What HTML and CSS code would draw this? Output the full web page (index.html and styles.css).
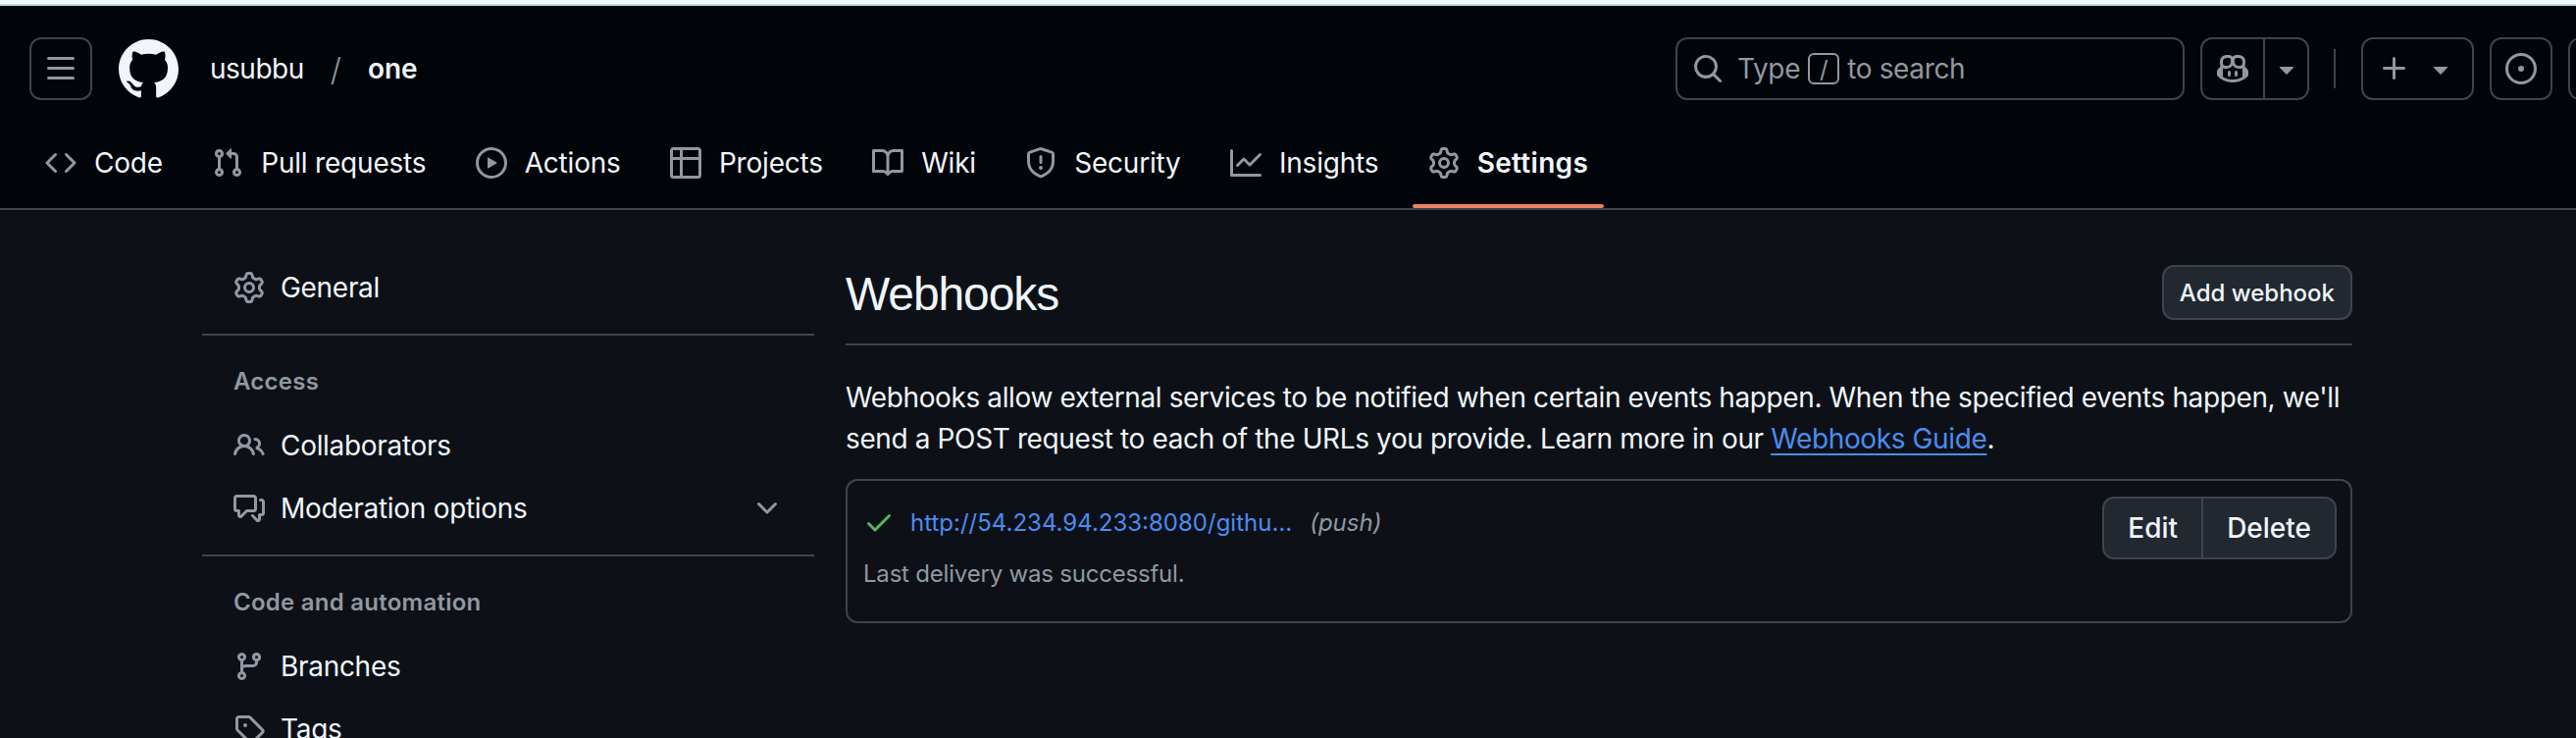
FILE: index.html
```html
<!DOCTYPE html>
<html lang="en">
<head>
<meta charset="utf-8">
<title>Webhooks · usubbu/one</title>
<link rel="stylesheet" href="styles.css">
</head>
<body>
<svg class="sprite" aria-hidden="true">
  <symbol id="i-gear" viewBox="0 0 16 16"><path d="M8 0a8.2 8.2 0 0 1 .701.031C9.444.095 9.99.645 10.16 1.29l.288 1.107c.018.066.079.158.212.224.231.114.454.243.668.386.123.082.233.09.299.071l1.103-.303c.644-.176 1.392.021 1.82.63.27.385.506.792.704 1.218.315.675.111 1.422-.364 1.891l-.814.806c-.049.048-.098.147-.088.294.016.257.016.515 0 .772-.01.147.038.246.088.294l.814.806c.475.469.679 1.216.364 1.891a7.977 7.977 0 0 1-.704 1.217c-.428.61-1.176.807-1.82.63l-1.102-.302c-.067-.019-.177-.011-.3.071a5.909 5.909 0 0 1-.668.386c-.133.066-.194.158-.211.224l-.29 1.106c-.168.646-.715 1.196-1.458 1.26a8.006 8.006 0 0 1-1.402 0c-.743-.064-1.289-.614-1.458-1.26l-.289-1.106c-.018-.066-.079-.158-.212-.224a5.738 5.738 0 0 1-.668-.386c-.123-.082-.233-.09-.299-.071l-1.103.303c-.644.176-1.392-.021-1.82-.63a8.12 8.12 0 0 1-.704-1.218c-.315-.675-.111-1.422.363-1.891l.815-.806c.05-.048.098-.147.088-.294a6.214 6.214 0 0 1 0-.772c.01-.147-.038-.246-.088-.294l-.815-.806C.635 6.045.431 5.298.746 4.623a7.92 7.92 0 0 1 .704-1.217c.428-.61 1.176-.807 1.82-.63l1.102.302c.067.019.177.011.3-.071.214-.143.437-.272.668-.386.133-.066.194-.158.211-.224l.29-1.106C6.009.645 6.556.095 7.299.03 7.53.01 7.764 0 8 0Zm-.571 1.525c-.036.003-.108.036-.137.146l-.289 1.105c-.147.561-.549.967-.998 1.189-.173.086-.34.183-.5.29-.417.278-.97.423-1.529.27l-1.103-.303c-.109-.03-.175.016-.195.045-.22.312-.412.644-.573.99-.014.031-.021.11.059.19l.815.806c.411.406.562.957.53 1.456a4.709 4.709 0 0 0 0 .582c.032.499-.119 1.05-.53 1.456l-.815.806c-.081.08-.073.159-.059.19.162.346.353.677.573.989.02.03.085.076.195.046l1.102-.303c.56-.153 1.113-.008 1.53.27.161.107.328.204.501.29.447.222.85.629.997 1.189l.289 1.105c.029.109.101.143.137.146a6.6 6.6 0 0 0 1.142 0c.036-.003.108-.036.137-.146l.289-1.105c.147-.561.549-.967.998-1.189.173-.086.34-.183.5-.29.417-.278.97-.423 1.529-.27l1.103.303c.109.029.175-.016.195-.045.22-.313.411-.644.573-.99.014-.031.021-.11-.059-.19l-.815-.806c-.411-.406-.562-.957-.53-1.456a4.709 4.709 0 0 0 0-.582c-.032-.499.119-1.05.53-1.456l.815-.806c.081-.08.073-.159.059-.19a6.464 6.464 0 0 0-.573-.989c-.02-.03-.085-.076-.195-.046l-1.102.303c-.56.153-1.113.008-1.53-.27a4.44 4.44 0 0 0-.501-.29c-.447-.222-.85-.629-.997-1.189l-.289-1.105c-.029-.11-.101-.143-.137-.146a6.6 6.6 0 0 0-1.142 0ZM11 8a3 3 0 1 1-6 0 3 3 0 0 1 6 0ZM9.5 8a1.5 1.5 0 1 0-3.001.001A1.5 1.5 0 0 0 9.5 8Z"/></symbol>
  <symbol id="i-caret" viewBox="0 0 16 16"><path d="m4.427 7.427 3.396 3.396a.25.25 0 0 0 .354 0l3.396-3.396A.25.25 0 0 0 11.396 7H4.604a.25.25 0 0 0-.177.427Z"/></symbol>
</svg>

<div class="strip"></div>

<header class="app-header">
  <div class="top-row">
    <div class="context">
      <button class="icon-btn" type="button" aria-label="Open menu">
        <svg class="icon" viewBox="0 0 16 16"><path d="M1 2.75A.75.75 0 0 1 1.75 2h12.5a.75.75 0 0 1 0 1.5H1.75A.75.75 0 0 1 1 2.75Zm0 5A.75.75 0 0 1 1.75 7h12.5a.75.75 0 0 1 0 1.5H1.75A.75.75 0 0 1 1 7.75ZM1.75 12h12.5a.75.75 0 0 1 0 1.5H1.75a.75.75 0 0 1 0-1.5Z"/></svg>
      </button>
      <svg class="logo" viewBox="0 0 16 16"><path d="M8 0c4.42 0 8 3.58 8 8a8.013 8.013 0 0 1-5.45 7.59c-.4.08-.55-.17-.55-.38 0-.27.01-1.13.01-2.2 0-.75-.25-1.23-.54-1.48 1.78-.2 3.65-.88 3.65-3.95 0-.88-.31-1.59-.82-2.15.08-.2.36-1.02-.08-2.12 0 0-.67-.22-2.2.82-.64-.18-1.32-.27-2-.27-.68 0-1.36.09-2 .27-1.53-1.03-2.2-.82-2.2-.82-.44 1.1-.16 1.92-.08 2.12-.51.56-.82 1.28-.82 2.15 0 3.06 1.86 3.75 3.64 3.95-.23.2-.44.55-.51 1.07-.46.21-1.61.55-2.33-.66-.15-.24-.6-.83-1.23-.82-.67.01-.27.38.01.53.34.19.73.9.82 1.13.16.45.68 1.31 2.69.94 0 .67.01 1.3.01 1.49 0 .21-.15.45-.55.38A7.995 7.995 0 0 1 0 8c0-4.42 3.58-8 8-8Z"/></svg>
      <a class="crumb">usubbu</a>
      <span class="crumb-sep">/</span>
      <a class="crumb crumb-current">one</a>
    </div>
    <div class="actions">
      <div class="search">
        <svg class="icon" viewBox="0 0 16 16"><path d="M10.68 11.74a6 6 0 0 1-7.922-8.982 6 6 0 0 1 8.982 7.922l3.04 3.04a.749.749 0 0 1-.326 1.275.749.749 0 0 1-.734-.215ZM11.5 7a4.499 4.499 0 1 0-8.997 0A4.499 4.499 0 0 0 11.5 7Z"/></svg>
        <span class="search-text">Type <kbd class="key">/</kbd> to search</span>
      </div>
      <div class="split">
        <button class="split-main" type="button" aria-label="Copilot">
          <svg class="icon" viewBox="0 0 16 16"><path d="M7.998 15.035c-4.562 0-7.873-2.914-7.998-3.749V9.338c.085-.628.677-1.686 1.588-2.065.013-.07.024-.143.036-.218.029-.183.06-.384.126-.612-.201-.508-.254-1.084-.254-1.656 0-.87.128-1.769.693-2.484.579-.733 1.494-1.124 2.724-1.261 1.206-.134 2.262.034 2.944.765.05.053.096.108.139.165.044-.057.094-.112.143-.165.682-.731 1.738-.899 2.944-.765 1.23.137 2.145.528 2.724 1.261.566.715.693 1.614.693 2.484 0 .572-.053 1.148-.254 1.656.066.228.098.429.126.612.012.076.024.148.037.218.924.385 1.522 1.471 1.591 2.095v1.872c0 .766-3.351 3.795-8.002 3.795Zm0-1.485c2.28 0 4.584-1.11 5.002-1.433V7.862l-.023-.116c-.49.21-1.075.291-1.727.291-1.146 0-2.059-.327-2.71-.991A3.222 3.222 0 0 1 8 6.303a3.24 3.24 0 0 1-.544.743c-.65.664-1.563.991-2.71.991-.652 0-1.236-.081-1.727-.291l-.023.116v4.255c.419.323 2.722 1.433 5.002 1.433ZM6.762 2.83c-.193-.206-.637-.413-1.682-.297-1.019.113-1.479.404-1.713.7-.247.312-.369.789-.369 1.554 0 .793.129 1.171.308 1.371.162.181.519.379 1.442.379.853 0 1.339-.235 1.638-.54.315-.322.527-.827.617-1.553.117-.935-.037-1.395-.241-1.614Zm4.155-.297c-1.044-.116-1.488.091-1.681.297-.204.219-.359.679-.242 1.614.091.726.303 1.231.618 1.553.299.305.784.54 1.638.54.922 0 1.28-.198 1.442-.379.179-.2.308-.578.308-1.371 0-.765-.123-1.242-.37-1.554-.233-.296-.693-.587-1.713-.7Z"/><path d="M6.25 9.037a.75.75 0 0 1 .75.75v1.501a.75.75 0 0 1-1.5 0V9.787a.75.75 0 0 1 .75-.75Zm4.25.75v1.501a.75.75 0 0 1-1.5 0V9.787a.75.75 0 0 1 1.5 0Z"/></svg>
        </button>
        <button class="split-caret" type="button" aria-label="Open Copilot menu">
          <svg class="icon" viewBox="0 0 16 16"><use href="#i-caret"/></svg>
        </button>
      </div>
      <span class="v-divider"></span>
      <button class="plus-btn" type="button" aria-label="Create new">
        <svg class="icon" viewBox="0 0 16 16"><path d="M7.75 2a.75.75 0 0 1 .75.75V7h4.25a.75.75 0 0 1 0 1.5H8.5v4.25a.75.75 0 0 1-1.5 0V8.5H2.75a.75.75 0 0 1 0-1.5H7V2.75A.75.75 0 0 1 7.75 2Z"/></svg>
        <svg class="icon" viewBox="0 0 16 16"><use href="#i-caret"/></svg>
      </button>
      <button class="icon-btn" type="button" aria-label="Issues">
        <svg class="icon" viewBox="0 0 16 16"><path d="M8 9.5a1.5 1.5 0 1 0 0-3 1.5 1.5 0 0 0 0 3Z"/><path d="M8 0a8 8 0 1 1 0 16A8 8 0 0 1 8 0ZM1.5 8a6.5 6.5 0 1 0 13 0 6.5 6.5 0 0 0-13 0Z"/></svg>
      </button>
      <button class="icon-btn" type="button" aria-label="Pull requests"></button>
    </div>
  </div>

  <nav class="tabs">
    <a class="tab">
      <svg class="icon" viewBox="0 0 16 16"><path d="m11.28 3.22 4.25 4.25a.75.75 0 0 1 0 1.06l-4.25 4.25a.749.749 0 0 1-1.275-.326.749.749 0 0 1 .215-.734L13.94 8l-3.72-3.72a.749.749 0 0 1 .326-1.275.749.749 0 0 1 .734.215Zm-6.56 0a.751.751 0 0 1 1.042.018.751.751 0 0 1 .018 1.042L2.06 8l3.72 3.72a.749.749 0 0 1-.326 1.275.749.749 0 0 1-.734-.215L.47 8.53a.75.75 0 0 1 0-1.06Z"/></svg>
      <span>Code</span>
    </a>
    <a class="tab">
      <svg class="icon" viewBox="0 0 16 16"><path d="M1.5 3.25a2.25 2.25 0 1 1 3 2.122v5.256a2.251 2.251 0 1 1-1.5 0V5.372A2.25 2.25 0 0 1 1.5 3.25Zm5.677-.177L9.573.677A.25.25 0 0 1 10 .854V2.5h1A2.5 2.5 0 0 1 13.5 5v5.628a2.251 2.251 0 1 1-1.5 0V5a1 1 0 0 0-1-1h-1v1.646a.25.25 0 0 1-.427.177L7.177 3.427a.25.25 0 0 1 0-.354ZM3.75 2.5a.75.75 0 1 0 0 1.5.75.75 0 0 0 0-1.5Zm0 9.5a.75.75 0 1 0 0 1.5.75.75 0 0 0 0-1.5Zm8.25.75a.75.75 0 1 0 1.5 0 .75.75 0 0 0-1.5 0Z"/></svg>
      <span>Pull requests</span>
    </a>
    <a class="tab">
      <svg class="icon" viewBox="0 0 16 16"><path d="M8 0a8 8 0 1 1 0 16A8 8 0 0 1 8 0ZM1.5 8a6.5 6.5 0 1 0 13 0 6.5 6.5 0 0 0-13 0Zm4.879-2.773 4.264 2.559a.25.25 0 0 1 0 .428l-4.264 2.559A.25.25 0 0 1 6 10.559V5.442a.25.25 0 0 1 .379-.215Z"/></svg>
      <span>Actions</span>
    </a>
    <a class="tab">
      <svg class="icon" viewBox="0 0 16 16"><path d="M0 1.75C0 .784.784 0 1.75 0h12.5C15.216 0 16 .784 16 1.75v12.5A1.75 1.75 0 0 1 14.25 16H1.75A1.75 1.75 0 0 1 0 14.25ZM6.5 6.5v8h7.75a.25.25 0 0 0 .25-.25V6.5Zm8-1.5V1.75a.25.25 0 0 0-.25-.25H6.5V5Zm-13 1.5v7.75c0 .138.112.25.25.25H5v-8ZM5 5V1.5H1.75a.25.25 0 0 0-.25.25V5Z"/></svg>
      <span>Projects</span>
    </a>
    <a class="tab">
      <svg class="icon" viewBox="0 0 16 16"><path d="M0 1.75A.75.75 0 0 1 .75 1h4.253c1.227 0 2.317.59 3 1.501A3.743 3.743 0 0 1 11.006 1h4.245a.75.75 0 0 1 .75.75v10.5a.75.75 0 0 1-.75.75h-4.507a2.25 2.25 0 0 0-1.591.659l-.622.621a.75.75 0 0 1-1.06 0l-.622-.621A2.25 2.25 0 0 0 5.258 13H.75a.75.75 0 0 1-.75-.75Zm7.251 10.324.004-5.073-.002-2.253A2.25 2.25 0 0 0 5.003 2.5H1.5v9h3.757a3.75 3.75 0 0 1 1.994.574ZM8.755 4.75l-.004 7.322a3.752 3.752 0 0 1 1.992-.572H14.5v-9h-3.495a2.25 2.25 0 0 0-2.25 2.25Z"/></svg>
      <span>Wiki</span>
    </a>
    <a class="tab">
      <svg class="icon" viewBox="0 0 16 16"><path d="M7.467.133a1.748 1.748 0 0 1 1.066 0l5.25 1.68A1.75 1.75 0 0 1 15 3.48V7c0 1.566-.32 3.182-1.303 4.682-.983 1.498-2.585 2.813-5.032 3.855a1.697 1.697 0 0 1-1.33 0c-2.447-1.042-4.049-2.357-5.032-3.855C1.32 10.182 1 8.566 1 7V3.48a1.75 1.75 0 0 1 1.217-1.667Zm.61 1.429a.25.25 0 0 0-.153 0l-5.25 1.68a.25.25 0 0 0-.174.238V7c0 1.358.275 2.666 1.057 3.86.784 1.194 2.121 2.34 4.366 3.297a.196.196 0 0 0 .154 0c2.245-.956 3.582-2.104 4.366-3.298C13.225 9.666 13.5 8.36 13.5 7V3.48a.251.251 0 0 0-.174-.237l-5.25-1.68ZM8.75 4.75v3a.75.75 0 0 1-1.5 0v-3a.75.75 0 0 1 1.5 0ZM9 10.5a1 1 0 1 1-2 0 1 1 0 0 1 2 0Z"/></svg>
      <span>Security</span>
    </a>
    <a class="tab">
      <svg class="icon" viewBox="0 0 16 16"><path d="M1.5 1.75V13.5h13.75a.75.75 0 0 1 0 1.5H.75a.75.75 0 0 1-.75-.75V1.75a.75.75 0 0 1 1.5 0Zm14.28 2.53-5.25 5.25a.75.75 0 0 1-1.06 0L7 7.06 4.28 9.78a.751.751 0 0 1-1.042-.018.751.751 0 0 1-.018-1.042l3.25-3.25a.75.75 0 0 1 1.06 0L10 7.94l4.72-4.72a.751.751 0 0 1 1.042.018.751.751 0 0 1 .018 1.042Z"/></svg>
      <span>Insights</span>
    </a>
    <a class="tab tab-current">
      <svg class="icon" viewBox="0 0 16 16"><use href="#i-gear"/></svg>
      <span>Settings</span>
    </a>
  </nav>
</header>

<main class="page">
  <aside class="sidebar">
    <a class="side-item">
      <svg class="icon" viewBox="0 0 16 16"><use href="#i-gear"/></svg>
      <span>General</span>
    </a>
    <hr class="side-rule">
    <div class="side-heading">Access</div>
    <a class="side-item">
      <svg class="icon" viewBox="0 0 16 16"><path d="M2 5.5a3.5 3.5 0 1 1 5.898 2.549 5.508 5.508 0 0 1 3.034 4.084.75.75 0 1 1-1.482.235 4 4 0 0 0-7.9 0 .75.75 0 0 1-1.482-.236A5.507 5.507 0 0 1 3.102 8.05 3.493 3.493 0 0 1 2 5.5ZM11 4a3.001 3.001 0 0 1 2.22 5.018 5.01 5.01 0 0 1 2.56 3.012.749.749 0 0 1-.885.954.752.752 0 0 1-.549-.514 3.507 3.507 0 0 0-2.522-2.372.75.75 0 0 1-.574-.73v-.352a.75.75 0 0 1 .416-.672A1.5 1.5 0 0 0 11 5.5.75.75 0 0 1 11 4Zm-5.5-.5a2 2 0 1 0-.001 3.999A2 2 0 0 0 5.5 3.5Z"/></svg>
      <span>Collaborators</span>
    </a>
    <a class="side-item">
      <svg class="icon" viewBox="0 0 16 16"><path d="M1.75 1h8.5c.966 0 1.75.784 1.75 1.75v5.5A1.75 1.75 0 0 1 10.25 10H7.061l-2.574 2.573A1.458 1.458 0 0 1 2 11.543V10h-.25A1.75 1.75 0 0 1 0 8.25v-5.5C0 1.784.784 1 1.75 1ZM1.5 2.75v5.5c0 .138.112.25.25.25h1a.75.75 0 0 1 .75.75v2.19l2.72-2.72a.749.749 0 0 1 .53-.22h3.5a.25.25 0 0 0 .25-.25v-5.5a.25.25 0 0 0-.25-.25h-8.5a.25.25 0 0 0-.25.25Zm13 2a.25.25 0 0 0-.25-.25h-.5a.75.75 0 0 1 0-1.5h.5c.966 0 1.75.784 1.75 1.75v5.5A1.75 1.75 0 0 1 14.25 12H14v1.543a1.458 1.458 0 0 1-2.487 1.03L9.22 12.28a.749.749 0 0 1 .326-1.275.749.749 0 0 1 .734.215l2.22 2.22v-2.19a.75.75 0 0 1 .75-.75h1a.25.25 0 0 0 .25-.25Z"/></svg>
      <span>Moderation options</span>
      <svg class="icon side-chevron" viewBox="0 0 16 16"><path d="M12.78 5.22a.749.749 0 0 1 0 1.06l-4.25 4.25a.749.749 0 0 1-1.06 0L3.22 6.28a.749.749 0 1 1 1.06-1.06L8 8.939l3.72-3.719a.749.749 0 0 1 1.06 0Z"/></svg>
    </a>
    <hr class="side-rule">
    <div class="side-heading">Code and automation</div>
    <a class="side-item">
      <svg class="icon" viewBox="0 0 16 16"><path d="M9.5 3.25a2.25 2.25 0 1 1 3 2.122V6A2.5 2.5 0 0 1 10 8.5H6a1 1 0 0 0-1 1v1.128a2.251 2.251 0 1 1-1.5 0V5.372a2.25 2.25 0 1 1 1.5 0v1.836A2.493 2.493 0 0 1 6 7h4a1 1 0 0 0 1-1v-.628A2.25 2.25 0 0 1 9.5 3.25Zm-6 0a.75.75 0 1 0 1.5 0 .75.75 0 0 0-1.5 0Zm8.25-.75a.75.75 0 1 0 0 1.5.75.75 0 0 0 0-1.5ZM4.25 12a.75.75 0 1 0 0 1.5.75.75 0 0 0 0-1.5Z"/></svg>
      <span>Branches</span>
    </a>
    <a class="side-item">
      <svg class="icon" viewBox="0 0 16 16"><path d="M1 7.775V2.75C1 1.784 1.784 1 2.75 1h5.025c.464 0 .91.184 1.238.513l6.25 6.25a1.75 1.75 0 0 1 0 2.474l-5.026 5.026a1.75 1.75 0 0 1-2.474 0l-6.25-6.25A1.752 1.752 0 0 1 1 7.775Zm1.5 0c0 .066.026.13.073.177l6.25 6.25a.25.25 0 0 0 .354 0l5.025-5.025a.25.25 0 0 0 0-.354l-6.25-6.25a.25.25 0 0 0-.177-.073H2.75a.25.25 0 0 0-.25.25ZM6 5a1 1 0 1 1 0 2 1 1 0 0 1 0-2Z"/></svg>
      <span>Tags</span>
    </a>
  </aside>

  <section class="content">
    <div class="subhead">
      <h2 class="subhead-title">Webhooks</h2>
      <button class="btn-small" type="button">Add webhook</button>
    </div>
    <p class="intro">Webhooks allow external services to be notified when certain events happen. When the specified events happen, we'll send a POST request to each of the URLs you provide. Learn more in our <a class="guide-link">Webhooks Guide</a>.</p>
    <div class="hook-box">
      <div class="hook-info">
        <div class="hook-row">
          <svg class="icon hook-check" viewBox="0 0 16 16"><path d="M13.78 4.22a.75.75 0 0 1 0 1.06l-7.25 7.25a.75.75 0 0 1-1.06 0L2.22 9.28a.751.751 0 0 1 .018-1.042.751.751 0 0 1 1.042-.018L6 10.94l6.72-6.72a.75.75 0 0 1 1.06 0Z"/></svg>
          <a class="hook-url">http://54.234.94.233:8080/githu…</a>
          <em class="hook-event">(push)</em>
        </div>
        <div class="hook-status">Last delivery was successful.</div>
      </div>
      <div class="btn-group">
        <button class="btn-seg" type="button">Edit</button>
        <button class="btn-seg" type="button">Delete</button>
      </div>
    </div>
  </section>
</main>
</body>
</html>
```
FILE: styles.css
```css
* { box-sizing: border-box; }

html, body {
  margin: 0;
  height: 752px;
  overflow: hidden;
  background: #0d1117;
  color: #f0f6fc;
  font-family: Inter, "Liberation Sans", sans-serif;
  font-size: 28px;
}

a { color: inherit; text-decoration: none; }
button { font-family: inherit; cursor: pointer; }

.sprite { display: none; }

.icon {
  width: 32px;
  height: 32px;
  flex: none;
  fill: #9198a1;
  display: block;
}

.strip {
  height: 6px;
  background: #eef8fa;
  border-bottom: 2px solid #bcd6dc;
}

.app-header {
  background: #010409;
  height: 206px;
  border-bottom: 2px solid #3d444d;
  box-sizing: content-box;
}

.top-row {
  display: flex;
  align-items: center;
  padding: 32px 0 0 30px;
  height: 96px;
}

.context {
  display: flex;
  align-items: center;
  flex: 1;
}

.icon-btn {
  width: 64px;
  height: 64px;
  flex: none;
  padding: 0;
  background: transparent;
  border: 2px solid #3d444d;
  border-radius: 12px;
  display: flex;
  align-items: center;
  justify-content: center;
}

.logo {
  width: 61px;
  height: 61px;
  margin: 0 32px 0 27px;
  fill: #f0f6fc;
  flex: none;
}

.crumb { line-height: 40px; letter-spacing: -0.5px; }
.crumb-current { font-weight: 600; letter-spacing: 0; }
.crumb-sep {
  color: #9198a1;
  font-weight: 300;
  font-size: 32px;
  margin: 0 27px;
}

.actions {
  display: flex;
  align-items: center;
  gap: 16px;
  flex: none;
  margin-right: -56px;
}

.search {
  width: 519px;
  height: 64px;
  border: 2px solid #3d444d;
  border-radius: 12px;
  display: flex;
  align-items: center;
  gap: 14px;
  padding-left: 15px;
}

.search-text {
  color: #9198a1;
  display: flex;
  align-items: center;
  gap: 8px;
  white-space: nowrap;
  letter-spacing: -0.35px;
}

.key {
  width: 32px;
  height: 32px;
  border: 2px solid #9198a1;
  border-radius: 6px;
  font-family: inherit;
  font-size: 24px;
  display: flex;
  align-items: center;
  justify-content: center;
}

.split {
  display: flex;
  width: 111px;
  height: 64px;
  border: 2px solid #3d444d;
  border-radius: 12px;
}

.split-main, .split-caret {
  background: transparent;
  border: 0;
  padding: 0;
  display: flex;
  align-items: center;
  justify-content: center;
}
.split-main { width: 64px; border-right: 2px solid #3d444d; }
.split-caret { flex: 1; }

.v-divider {
  width: 2px;
  height: 40px;
  background: #3d444d;
  margin: 0 10px 0 9px;
}

.plus-btn {
  width: 115px;
  height: 64px;
  background: transparent;
  border: 2px solid #3d444d;
  border-radius: 12px;
  padding: 0 16px;
  display: flex;
  align-items: center;
  justify-content: space-between;
}

.tabs {
  display: flex;
  gap: 18.3px;
  padding: 32px 0 0 30px;
}

.tab {
  position: relative;
  display: flex;
  align-items: center;
  gap: 18px;
  height: 78px;
  padding: 0 16px 14px;
  white-space: nowrap;
  letter-spacing: -0.2px;
}

.tab-current { font-weight: 600; letter-spacing: 0.3px; }
.tab-current::after {
  content: "";
  position: absolute;
  left: 0;
  right: 0;
  bottom: 0;
  height: 4px;
  border-radius: 2px;
  background: #ea8068;
}

.page {
  display: flex;
  gap: 32px;
  padding: 0 0 0 206px;
}

.sidebar {
  width: 624px;
  flex: none;
  padding-top: 47px;
}

.side-item {
  display: flex;
  align-items: center;
  gap: 16px;
  height: 64px;
  padding: 0 32px;
  letter-spacing: -0.3px;
}

.side-chevron { margin-left: auto; }

.side-rule {
  height: 2px;
  margin: 15px 0 0;
  border: 0;
  background: #3d444d;
}

.side-heading {
  color: #9198a1;
  font-size: 24px;
  font-weight: 600;
  line-height: 40px;
  padding: 0 32px;
  margin: 27px 0 13px;
  letter-spacing: 0.25px;
}

.content {
  width: 1536px;
  flex: none;
  padding-top: 56px;
}

.subhead {
  display: flex;
  align-items: center;
  justify-content: space-between;
  padding-bottom: 24px;
  border-bottom: 2px solid #3d444d;
}

.subhead-title {
  margin: 3px 0 0;
  font-family: "Liberation Sans", Inter, sans-serif;
  font-size: 48px;
  font-weight: 400;
  line-height: 52px;
  letter-spacing: -1.1px;
}

.btn-small {
  height: 56px;
  padding: 0 16px;
  background: #212830;
  color: #f0f6fc;
  border: 2px solid #3d444d;
  border-radius: 12px;
  font-size: 24px;
  font-weight: 500;
}

.intro {
  margin: 32px 0 20px;
  line-height: 42px;
  letter-spacing: -0.38px;
}

.guide-link {
  color: #4b8cf0;
  text-decoration: underline;
  text-underline-offset: 5px;
}

.hook-box {
  display: flex;
  justify-content: space-between;
  align-items: flex-start;
  height: 147px;
  padding: 16px 14px 0 16px;
  border: 2px solid #3d444d;
  border-radius: 12px;
}

.hook-row {
  display: flex;
  align-items: center;
  height: 52px;
  font-size: 24px;
}

.hook-check { fill: #56b55f; margin-right: 16px; }
.hook-url { color: #4b8cf0; white-space: nowrap; }
.hook-event { color: #9198a1; margin-left: 18px; }

.hook-status {
  color: #9198a1;
  font-size: 24px;
  line-height: 36px;
  margin-top: 9px;
  letter-spacing: -0.2px;
}

.btn-group {
  display: flex;
  height: 64px;
  background: #212830;
  border: 2px solid #3d444d;
  border-radius: 12px;
}

.btn-seg {
  background: transparent;
  border: 0;
  padding: 0 24px;
  color: #f0f6fc;
  font-size: 28px;
  font-weight: 500;
}
.btn-seg + .btn-seg { border-left: 2px solid #3d444d; }
```
